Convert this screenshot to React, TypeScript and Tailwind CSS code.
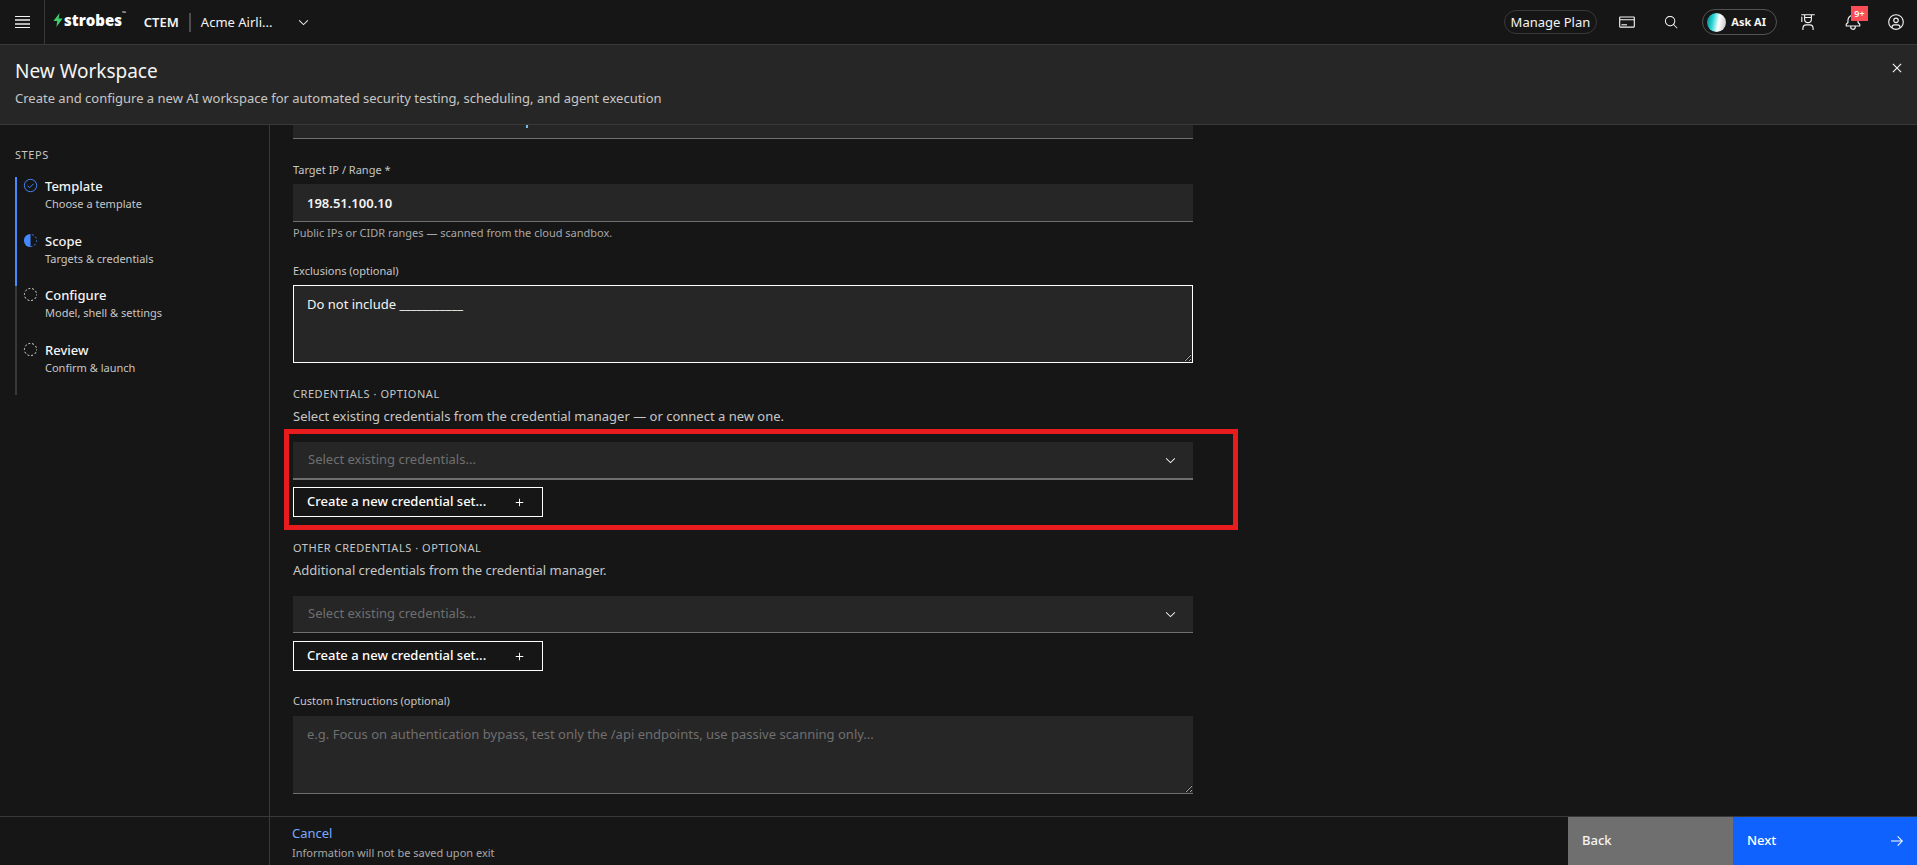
import { useState } from 'react';
import type { ReactNode } from 'react';

type StepStatus = 'complete' | 'current' | 'incomplete';

const steps: { title: string; description: string; status: StepStatus }[] = [
  { title: 'Template', description: 'Choose a template', status: 'complete' },
  { title: 'Scope', description: 'Targets & credentials', status: 'current' },
  { title: 'Configure', description: 'Model, shell & settings', status: 'incomplete' },
  { title: 'Review', description: 'Confirm & launch', status: 'incomplete' },
];

function Icon({ children, className = 'size-[18px]' }: { children: ReactNode; className?: string }) {
  return (
    <svg viewBox="0 0 32 32" fill="currentColor" className={className} aria-hidden="true">
      {children}
    </svg>
  );
}

function ChevronDown({ className = 'size-[15px]' }: { className?: string }) {
  return (
    <svg viewBox="0 0 16 16" fill="currentColor" className={className} aria-hidden="true">
      <path d="M8 11L3 6 3.7 5.3 8 9.6 12.3 5.3 13 6z" />
    </svg>
  );
}

function StepIcon({ status }: { status: StepStatus }) {
  if (status === 'complete') {
    return (
      <svg viewBox="0 0 16 16" fill="none" stroke="currentColor" className="size-[15px] text-[#4589ff]" aria-hidden="true">
        <circle cx="8" cy="8" r="6.6" />
        <path d="M4.8 8.2L7 10.4 11.2 6.2" />
      </svg>
    );
  }
  if (status === 'current') {
    return (
      <svg viewBox="0 0 16 16" fill="none" stroke="currentColor" className="size-[15px] text-[#4589ff]" aria-hidden="true">
        <path d="M8 1a7 7 0 0 0 0 14z" fill="currentColor" stroke="none" />
        <path d="M8 1.5a6.5 6.5 0 0 1 0 13" strokeDasharray="2 2.1" strokeDashoffset="-1.5" />
      </svg>
    );
  }
  return (
    <svg viewBox="0 0 16 16" fill="none" stroke="currentColor" className="size-[15px] text-[#f4f4f4]" aria-hidden="true">
      <circle cx="8" cy="8" r="6.5" strokeDasharray="2 2.08" strokeDashoffset="1" />
    </svg>
  );
}

function HeaderButton({ label, className = 'w-[45px]', children }: { label: string; className?: string; children: ReactNode }) {
  return (
    <button aria-label={label} className={`relative h-11 flex justify-center items-center ${className}`}>
      {children}
    </button>
  );
}

function TopBar() {
  return (
    <header className="h-[45px] shrink-0 flex items-center border-b border-[#393939]">
      <button aria-label="Menu" className="w-[45px] h-full flex justify-center items-center border-r border-[#393939]">
        <svg viewBox="0 0 15 12" className="w-[15px] h-3" aria-hidden="true">
          <path d="M0 .5h15M0 11.5h15" stroke="#f4f4f4" />
          <path d="M0 4h15M0 8h15" stroke="#b5b5b5" strokeWidth="2" />
        </svg>
      </button>
      <a href="#" className="flex items-center ml-2 pb-1 text-white">
        <svg viewBox="0 0 10 14" className="w-[10px] h-[14px]" aria-hidden="true">
          <path d="M6.6 0L.4 8h3.8L3.4 14 9.6 5.6H5.6z" fill="#3ecf6b" />
        </svg>
        <span className="ml-px font-['Open_Sans'] text-[15px] leading-5 font-extrabold">strobes</span>
        <span className="self-start text-[5px] leading-[6px]">™</span>
      </a>
      <span className="ml-[18px] text-[13px] leading-4 font-semibold text-[#f4f4f4]">CTEM</span>
      <span className="mx-[10px] h-[19px] w-[2px] bg-[#4c4c4c]" />
      <button className="flex items-center gap-6 text-[13px] leading-4 text-[#f4f4f4]">
        Acme Airli...
        <ChevronDown />
      </button>

      <div className="ml-auto flex items-center text-[#f4f4f4]">
        <button className="h-6 px-[6px] mr-[7px] rounded-full border border-[#393939] text-[13px] leading-4">Manage Plan</button>
        <HeaderButton label="Billing">
          <Icon>
            <path d="M28,6H4A2,2,0,0,0,2,8V24a2,2,0,0,0,2,2H28a2,2,0,0,0,2-2V8A2,2,0,0,0,28,6Zm0,2v3H4V8ZM4,24V13H28V24Z" />
            <path d="M6 20H16V22H6z" />
          </Icon>
        </HeaderButton>
        <HeaderButton label="Search">
          <Icon className="size-[15px]">
            <path d="M29,27.5859l-7.5521-7.5521a11.0177,11.0177,0,1,0-1.4141,1.4141L27.5859,29ZM4,13a9,9,0,1,1,9,9A9.01,9.01,0,0,1,4,13Z" />
          </Icon>
        </HeaderButton>
        <button className="h-[26px] mx-2 pl-1 pr-[10px] flex items-center gap-[5px] rounded-full border border-[#525252] text-[11px] font-bold">
          <span className="size-[19px] rounded-full bg-[linear-gradient(100deg,#0f8f92_5%,#22d3d3_30%,#ffffff_60%,#d0d0d0_90%)]" />
          Ask AI
        </button>
        <HeaderButton label="Learn">
          <Icon>
            <path d="M26,30H24V27a5.0059,5.0059,0,0,0-5-5H13a5.0059,5.0059,0,0,0-5,5v3H6V27a7.0082,7.0082,0,0,1,7-7h6a7.0082,7.0082,0,0,1,7,7Z" />
            <path d="M5,6A1,1,0,0,0,4,7v9H6V7A1,1,0,0,0,5,6Z" />
            <path d="M4,2V4H9v7a7,7,0,0,0,14,0V4h5V2Zm7,2H21V7H11Zm5,12a5,5,0,0,1-5-5V9H21v2A5,5,0,0,1,16,16Z" />
          </Icon>
        </HeaderButton>
        <HeaderButton label="Notifications">
          <Icon>
            <path d="M28.7071,19.293,26,16.5859V13a10.0136,10.0136,0,0,0-9-9.9492V1H15V3.0508A10.0136,10.0136,0,0,0,6,13v3.5859L3.2929,19.293A1,1,0,0,0,3,20v3a1,1,0,0,0,1,1h7v.7768a5.152,5.152,0,0,0,4.5,5.1987A5.0057,5.0057,0,0,0,21,25V24h7a1,1,0,0,0,1-1V20A1,1,0,0,0,28.7071,19.293ZM19,25a3,3,0,0,1-6,0V24h6Zm8-3H5V20.4141L7.707,17.707A1,1,0,0,0,8,17V13a8,8,0,0,1,16,0v4a1,1,0,0,0,.293.707L27,20.4141Z" />
          </Icon>
          <span className="absolute top-[6px] left-[21px] w-[17px] h-[15px] bg-[#fa4d56] text-[9px] leading-[15px] font-semibold text-white text-center">9+</span>
        </HeaderButton>
        <HeaderButton label="Account" className="w-[42px]">
          <Icon>
            <path d="M16,8a5,5,0,1,0,5,5A5,5,0,0,0,16,8Zm0,8a3,3,0,1,1,3-3A3.0034,3.0034,0,0,1,16,16Z" />
            <path d="M16,2A14,14,0,1,0,30,16,14.0158,14.0158,0,0,0,16,2ZM10,26.3765V25a3.0033,3.0033,0,0,1,3-3h6a3.0033,3.0033,0,0,1,3,3v1.3765a11.8989,11.8989,0,0,1-12,0Zm13.9925-1.4507A5.0016,5.0016,0,0,0,19,20H13a5.0016,5.0016,0,0,0-4.9925,4.9258,12,12,0,1,1,15.985,0Z" />
          </Icon>
        </HeaderButton>
      </div>
    </header>
  );
}

function Stepper() {
  return (
    <nav className="w-[270px] shrink-0 border-r border-[#393939] pl-[15px] pt-[22px]">
      <h2 className="text-[11px] leading-4 tracking-wider text-[#c6c6c6]">STEPS</h2>
      <ol className="mt-[14px] h-[218px] flex flex-col">
        {steps.map((step) => (
          <li
            key={step.title}
            className={`flex-1 pl-[6px] pt-px flex items-start gap-[7px] border-l-2 ${
              step.status === 'incomplete' ? 'border-[#393939]' : 'border-[#4589ff]'
            }`}
          >
            <StepIcon status={step.status} />
            <div>
              <p className="text-[13px] leading-4 font-medium text-[#f4f4f4]">{step.title}</p>
              <p className="mt-px text-[11px] leading-[18px] text-[#c6c6c6]">{step.description}</p>
            </div>
          </li>
        ))}
      </ol>
    </nav>
  );
}

function CredentialSection({
  id,
  title,
  description,
  highlighted = false,
}: {
  id: string;
  title: string;
  description: string;
  highlighted?: boolean;
}) {
  return (
    <section>
      <h3 className="text-[11px] leading-4 tracking-wider text-[#c6c6c6]">{title}</h3>
      <label htmlFor={id} className="block mt-[6px] text-[13px] leading-4 text-[#c6c6c6]">
        {description}
      </label>
      <div className="relative mt-[18px]">
        {highlighted && (
          <div className="absolute -top-[13px] -left-[9px] -right-[45px] -bottom-[13px] border-[5px] border-[#e81c1c] pointer-events-none" />
        )}
        <div className="relative h-[38px]">
          <select
            id={id}
            className={`block w-full pl-[15px] appearance-none bg-[#262626] border-[#6f6f6f] text-[13px] text-[#6f6f6f] outline-none ${
              highlighted ? 'h-[38px] border-b-2' : 'h-[37px] border-b'
            }`}
          >
            <option>Select existing credentials...</option>
          </select>
          <ChevronDown className="size-[15px] absolute right-[15px] top-[11px] text-[#f4f4f4] pointer-events-none" />
        </div>
        <button className="mt-[7px] w-[250px] h-[30px] pl-[13px] pr-[15px] flex justify-between items-center border border-white text-[13px] font-medium text-white">
          Create a new credential set...
          <Icon className="size-[15px]">
            <path d="M17 15L17 8 15 8 15 15 8 15 8 17 15 17 15 24 17 24 17 17 24 17 24 15z" />
          </Icon>
        </button>
      </div>
    </section>
  );
}

function ScopeForm() {
  const [name, setName] = useState('Acme Airlines external site network pen test');
  const [target, setTarget] = useState('198.51.100.10');
  const [exclusions, setExclusions] = useState('Do not include ___________');
  const [instructions, setInstructions] = useState('');

  return (
    <form className="w-full max-w-[900px] ml-[23px] pb-[22px] flex flex-col">
      <input
        aria-label="Name"
        value={name}
        onChange={(e) => setName(e.target.value)}
        className="h-[38px] px-[14px] bg-[#262626] border-b border-[#6f6f6f] text-[13px] text-[#f4f4f4] outline-none"
      />

      <label htmlFor="target" className="mt-[23px] text-[11px] leading-4 text-[#c6c6c6]">
        Target IP / Range *
      </label>
      <input
        id="target"
        value={target}
        onChange={(e) => setTarget(e.target.value)}
        className="mt-[6px] h-[38px] px-[14px] bg-[#262626] border-b border-[#6f6f6f] text-[13px] font-semibold text-[#f4f4f4] outline-none"
      />
      <p className="mt-[3px] text-[11px] leading-4 text-[#a8a8a8]">Public IPs or CIDR ranges — scanned from the cloud sandbox.</p>

      <label htmlFor="exclusions" className="mt-[22px] text-[11px] leading-4 text-[#c6c6c6]">
        Exclusions (optional)
      </label>
      <textarea
        id="exclusions"
        value={exclusions}
        onChange={(e) => setExclusions(e.target.value)}
        className="mt-[6px] h-[78px] px-[13px] py-[9px] bg-[#262626] border border-white text-[13px] leading-[18px] text-[#f4f4f4] outline-none scheme-dark"
      />

      <div className="mt-[23px] flex flex-col gap-[23px]">
        <CredentialSection
          id="credentials"
          title="CREDENTIALS · OPTIONAL"
          description="Select existing credentials from the credential manager — or connect a new one."
          highlighted
        />
        <CredentialSection
          id="other-credentials"
          title="OTHER CREDENTIALS · OPTIONAL"
          description="Additional credentials from the credential manager."
        />
      </div>

      <label htmlFor="instructions" className="mt-[22px] text-[11px] leading-4 text-[#c6c6c6]">
        Custom Instructions (optional)
      </label>
      <textarea
        id="instructions"
        value={instructions}
        onChange={(e) => setInstructions(e.target.value)}
        placeholder="e.g. Focus on authentication bypass, test only the /api endpoints, use passive scanning only..."
        className="mt-[7px] h-[78px] px-[14px] py-[9px] bg-[#262626] border-b border-[#6f6f6f] text-[13px] leading-[18px] text-[#f4f4f4] placeholder:text-[#6f6f6f] outline-none scheme-dark"
      />
    </form>
  );
}

function Footer() {
  return (
    <footer className="h-[49px] shrink-0 flex border-t border-[#393939]">
      <div className="w-[270px] shrink-0 border-r border-[#393939]" />
      <div className="pl-[22px] pt-2">
        <a href="#" className="block text-[13px] leading-4 text-[#78a9ff]">
          Cancel
        </a>
        <p className="mt-1 text-[11px] leading-4 text-[#a8a8a8]">Information will not be saved upon exit</p>
      </div>
      <button className="ml-auto w-[165px] pl-[14px] bg-[#6f6f6f] text-[13px] font-medium text-left text-[#f4f4f4]">Back</button>
      <button className="w-[184px] pl-[14px] pr-3 flex justify-between items-center bg-[#0f62fe] text-[13px] font-medium text-white">
        Next
        <Icon className="size-4">
          <path d="M18 6 16.57 7.393 24.15 15 4 15 4 17 24.15 17 16.57 24.573 18 26 28 16 18 6z" />
        </Icon>
      </button>
    </footer>
  );
}

function App() {
  return (
    <div className="h-screen flex flex-col bg-[#161616] font-['Noto_Sans',sans-serif] overflow-hidden">
      <TopBar />
      <div className="h-20 shrink-0 pl-[15px] pr-[11px] pt-3 flex justify-between items-start bg-[#262626] border-b border-[#393939]">
        <div>
          <h1 className="text-[19px] leading-[28px] text-[#f4f4f4]">New Workspace</h1>
          <p className="mt-[4px] text-[13px] leading-[18px] text-[#c6c6c6]">
            Create and configure a new AI workspace for automated security testing, scheduling, and agent execution
          </p>
        </div>
        <button aria-label="Close" className="mt-[2px] text-[#f4f4f4]">
          <Icon>
            <path d="M17.4141 16L24 9.4141 22.5859 8 16 14.5859 9.4143 8 8 9.4141 14.5859 16 8 22.5859 9.4143 24 16 17.4141 22.5859 24 24 22.5859z" />
          </Icon>
        </button>
      </div>
      <div className="flex-1 min-h-0 flex">
        <Stepper />
        {/* reversed column keeps the form scrolled to its end */}
        <main className="flex-1 min-w-0 flex flex-col-reverse overflow-y-auto [scrollbar-width:none]">
          <ScopeForm />
        </main>
      </div>
      <Footer />
    </div>
  );
}

export default App;
